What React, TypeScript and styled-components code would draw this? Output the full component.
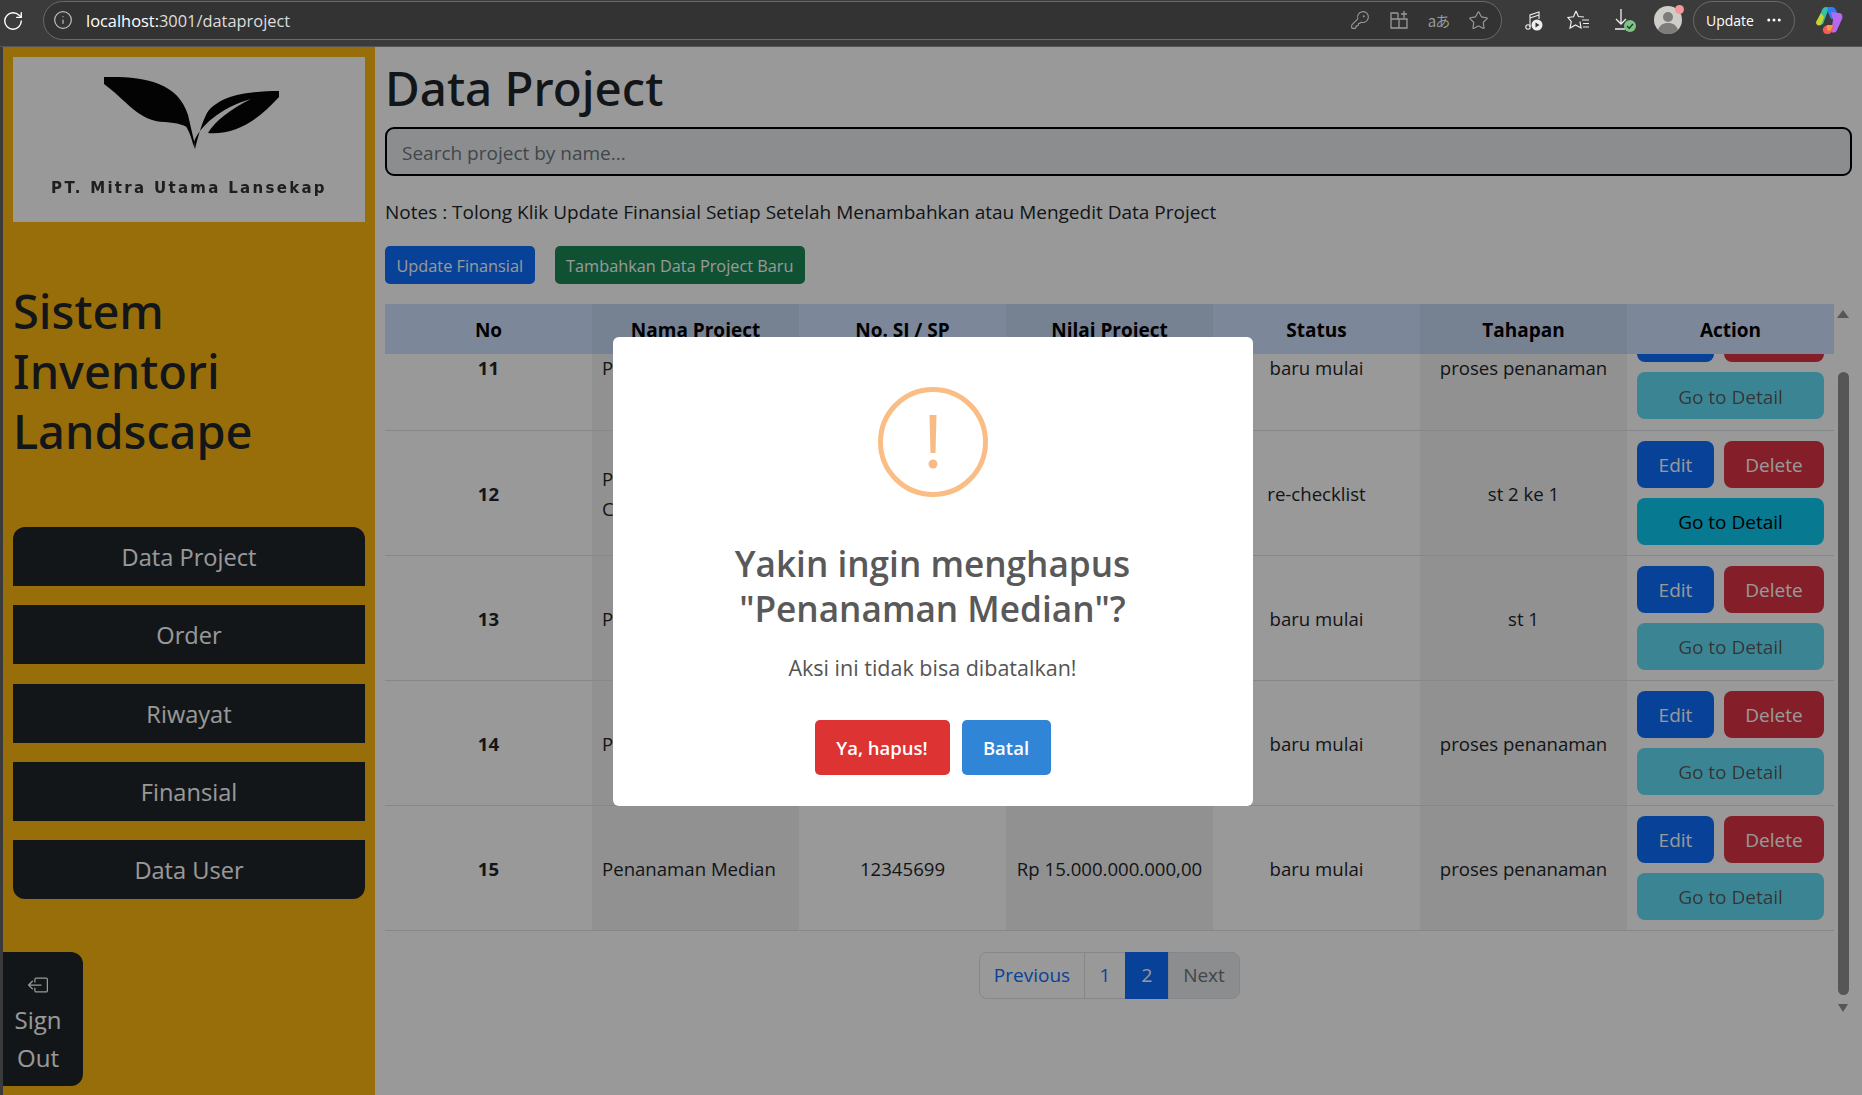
import React, { useLayoutEffect, useRef } from "react";
import styled, { createGlobalStyle } from "styled-components";
import { BsBoxArrowLeft } from "react-icons/bs";
import { RotateCw, Info, KeyRound, Star, MoreHorizontal } from "lucide-react";

const Global = createGlobalStyle`
  html, body { margin: 0; padding: 0; height: 100%; overflow: hidden; }
  body { font-family: "Open Sans", "Noto Sans", sans-serif; color: #212529; background: #3b3b3b; }
  * { box-sizing: border-box; }
`;
const Root = styled.div`height: 1095px; display: flex; flex-direction: column; position: relative; overflow: hidden;`;
const Bar = styled.div`height: 47px; flex: none; display: flex; align-items: center; background: #3b3b3b; color: #fff; border-bottom: 1px solid #555;`;
const Reload = styled.div`width: 43px; padding: 0 0 5px 2px; display: flex; align-items: center;`;
const Address = styled.div`width: 1459px; height: 39px; margin-top: -6px; border: 1px solid #6a6a6a; border-radius: 20px; background: #333; display: flex; align-items: center; padding: 0 12px 0 9px; gap: 13px;`;
const Url = styled.div`font-size: 16.4px; flex: 1; color: #ddd; b { font-weight: 400; color: #fff; }`;
const Gray = styled.div`display: flex; align-items: center; gap: 19px; color: #9a9a9a;`;
const Lang = styled.span`font-family: "Noto Sans CJK JP", "Noto Sans", sans-serif; font-size: 15px; width: 21px; text-align: center; letter-spacing: -1px; white-space: nowrap; display: flex; justify-content: center;`;
const Tools = styled.div`display: flex; align-items: center; margin-top: -6px; gap: 24px; padding-left: 23px;`;
const Avatar = styled.div`position: relative; width: 28px; height: 28px; margin-left: -8px; flex: none;`;
const Dot = styled.span`position: absolute; top: -1px; right: -2px; width: 9px; height: 9px; background: #f29a9a; border-radius: 50%;`;
const UpdatePill = styled.div`width: 102px; height: 39px; margin-left: -13px; border: 1px solid #6a6a6a; border-radius: 20px; display: flex; align-items: center; gap: 11px; padding-left: 12px; font-size: 14px; flex: none;`;
const Copilot = styled.div`margin-left: -4px; display: flex; flex: none;`;

const Page = styled.div`flex: 1; min-height: 0; margin-left: 3px; display: flex; position: relative; background: #fff;`;
const Side = styled.aside`width: 372px; flex: none; background: rgb(252, 184, 16); padding: 10px 10px 9px; display: flex; flex-direction: column;`;
const Logo = styled.div`height: 165px; background: #fff; display: flex; flex-direction: column; align-items: center;`;
const LogoText = styled.div`font-family: "DejaVu Sans", sans-serif; font-weight: 700; font-size: 15px; line-height: 16px; color: #333; letter-spacing: 2.3px; white-space: nowrap; margin-top: 25px; filter: blur(.4px);`;
const Brand = styled.h1`font-size: 47px; font-weight: 500; line-height: 60px; margin: 59px 0 66px; color: #212529; font-family: "Noto Sans", sans-serif;`;
const Nav = styled.nav`display: flex; flex-direction: column; gap: 19.25px;`;
const NavBtn = styled.button`height: 59px; background: #212529; color: #fff; border: 0; border-radius: 0; font: inherit; font-size: 23.6px; padding-top: 2px; &:first-child { border-radius: 12px 12px 0 0; } &:last-child { border-radius: 0 0 12px 12px; }`;
const SignOut = styled.button`width: 80px; height: 134px; margin: auto 0 0 -10px; background: #212529; color: #fff; border: 0; border-radius: 0 12px 12px 0; font: inherit; font-size: 24px; line-height: 38px; display: flex; flex-direction: column; align-items: center; justify-content: flex-start; padding: 23px 10px 0 0; svg { margin-bottom: 6px; }`;
const Main = styled.main`flex: 1; min-width: 0; padding: 0 10px; display: flex; flex-direction: column;`;
const H = styled.h1`font-size: 47.5px; font-weight: 500; line-height: 60px; margin: 11px 0 9px 0; font-family: "Noto Sans", sans-serif;`;
const Search = styled.input`height: 49px; width: 1467px; border: 2.5px solid #000; border-radius: 9px; padding: 2px 15px 0; font: inherit; font-size: 19px; background: #e9ecef; outline: 0; flex: none; &::placeholder { color: #6c757d; }`;
const Notes = styled.p`font-size: 19px; line-height: 30px; margin: 21px 0 19px;`;
const Actions = styled.div`display: flex; gap: 20px; margin-bottom: 20px;`;
const SmallBtn = styled.button<{ $bg: string }>`height: 38px; border: 0; border-radius: 5px; padding: 1px 11.5px 0; color: #fff; background: ${p => p.$bg}; font: inherit; font-size: 16.3px; white-space: nowrap;`;
const Area = styled.div`display: flex; width: 1467px; height: 713px; flex: none;`;
const Scroll = styled.div`width: 1449px; height: 100%; overflow-y: scroll; scrollbar-width: none;`;
const Table = styled.table`width: 1449px; border-collapse: collapse; table-layout: fixed;`;
const Th = styled.th<{ $even?: boolean }>`height: 50px; position: sticky; top: 0; z-index: 2; padding: 2px 0 0; font-size: 19px; font-weight: 700; color: #000; background: ${p => p.$even ? "#c5d7f2" : "#cfe2ff"};`;
const Tr = styled.tr`height: 125px; border-bottom: 1px solid #dee2e6;`;
const Td = styled.td<{ $even?: boolean; $bold?: boolean; $left?: boolean }>`padding: 2px ${p => p.$left ? "8px" : "9px"} 0 ${p => p.$left ? "10px" : "9px"}; font-size: 18.6px; line-height: 30px; color: #212529; text-align: ${p => p.$left ? "left" : "center"}; font-weight: ${p => p.$bold ? 700 : 400}; background: ${p => p.$even ? "#f2f2f2" : "#fff"};`;
const Money = styled.span`white-space: nowrap;`;
const BtnGrid = styled.div`display: grid; grid-template-columns: 77px 100px; gap: 10px; justify-content: center; margin-top: -2px;`;
const RowBtn = styled.button<{ $bg: string; $dark?: boolean; $wide?: boolean }>`height: 47px; border: 0; border-radius: 8px; background: ${p => p.$bg}; color: ${p => p.$dark ? "#000" : "#fff"}; font: inherit; font-size: 19px; padding: 2px 0 0; ${p => p.$wide ? "grid-column: 1 / 3;" : ""} &:disabled { opacity: .65; }`;
const Pager = styled.div`display: flex; justify-content: center; margin: 21px 0 19px; height: 47px;`;
const PageBtn = styled.div<{ $active?: boolean; $off?: boolean; $w: number; $first?: boolean; $last?: boolean }>`width: ${p => p.$w}px; height: 47px; display: flex; align-items: center; justify-content: center; font-size: 19px; border: 1px solid ${p => p.$active ? "#0d6efd" : "#dee2e6"}; margin-left: ${p => p.$first ? 0 : -1}px; background: ${p => p.$active ? "#0d6efd" : p.$off ? "#e9ecef" : "#fff"}; color: ${p => p.$active ? "#fff" : p.$off ? "#6c757d" : "#0d6efd"}; border-radius: ${p => p.$first ? "8px 0 0 8px" : p.$last ? "0 8px 8px 0" : "0"};`;
const Rail = styled.div`width: 16px; margin-left: 1px; display: flex; flex-direction: column; align-items: center; height: 100%; background: #fff;`;
const Thumb = styled.div`width: 11px; height: 623px; background: #8f8f8f; border-radius: 6px; margin: 52px 0 2px; flex: none;`;
const Arrow = styled.svg`flex: none; margin-top: 6px;`;

const Overlay = styled.div`position: absolute; inset: 0; background: rgba(0,0,0,.4); display: flex; align-items: center; justify-content: center; z-index: 5; padding-top: 1px;`;
const Modal = styled.div`width: 640px; height: 469px; background: #fff; border-radius: 6px; display: flex; flex-direction: column; align-items: center; color: #545454;`;
const Ring = styled.div`margin-top: 50px; width: 110px; height: 110px; border: 5px solid #fabd85; border-radius: 50%; display: flex; align-items: center; justify-content: center; font-size: 0; flex: none;`;
const Mark = styled.svg`display: block;`;
const MTitle = styled.h2`margin: 44px 0 0; font-size: 35.2px; line-height: 45px; font-weight: 600; color: #595959; text-align: center;`;
const MText = styled.p`margin: 20px 0 0; font-size: 21.5px; line-height: 34px; color: #545454;`;
const MBtns = styled.div`display: flex; gap: 12px; margin-top: 35px;`;
const MBtn = styled.button<{ $bg: string; $w: number }>`width: ${p => p.$w}px; height: 55px; border: 0; border-radius: 5px; background: ${p => p.$bg}; color: #fff; font: inherit; font-size: 18.5px; font-weight: 600; padding: 0;`;

const rows = [
  { no: 11, name: "Penanaman Median", si: "12345699", val: "Rp 15.000.000.000,00", st: "baru mulai", ta: "proses penanaman", off: true },
  { no: 12, name: "Penanaman Median Cibubur", si: "12345699", val: "Rp 15.000.000.000,00", st: "re-checklist", ta: "st 2 ke 1", off: false },
  { no: 13, name: "Penanaman Median", si: "12345699", val: "Rp 15.000.000.000,00", st: "baru mulai", ta: "st 1", off: true },
  { no: 14, name: "Penanaman Median", si: "12345699", val: "Rp 15.000.000.000,00", st: "baru mulai", ta: "proses penanaman", off: true },
  { no: 15, name: "Penanaman Median", si: "12345699", val: "Rp 15.000.000.000,00", st: "baru mulai", ta: "proses penanaman", off: true },
];
const heads = ["No", "Nama Project", "No. SI / SP", "Nilai Project", "Status", "Tahapan", "Action"];

const Leaves = () => (
  <svg width="352" height="98" viewBox="0 0 352 98">
    <path d="M91 20 C128 19 165 24 175 58 L181 84 L182 92 L180 87 C176 68 160 44 122 28 C146 36 166 50 176 72 C172 68 165 66 152 65 C126 65 112 42 91 27 Z" fill="#050505" />
    <path d="M266 34 C236 34 206 38 194 56 C189 66 186 76 182 92 L181 85 C186 70 208 50 238 42 C218 52 202 64 195 76 C224 78 246 62 266 40 Z" fill="#050505" />
  </svg>
);

export default function App() {
  const ref = useRef<HTMLDivElement>(null);
  useLayoutEffect(() => { if (ref.current) ref.current.scrollTop = 49; }, []);
  return (
    <Root>
      <Global />
      <Bar>
        <Reload><RotateCw size={22} strokeWidth={1.5} /></Reload>
        <Address>
          <Info size={20} strokeWidth={1.5} color="#bbb" />
          <Url><b>localhost:</b>3001/dataproject</Url>
          <Gray>
            <KeyRound size={20} strokeWidth={1.3} />
            <svg width="20" height="20" viewBox="0 0 20 20" fill="none" stroke="currentColor" strokeWidth="1.3"><path d="M9 3H2v15h16V9H2M10 9v9M9 3v6M15 1v7M12 4h6" /></svg>
            <Lang>aあ</Lang>
            <Star size={21} strokeWidth={1.3} />
          </Gray>
        </Address>
        <Tools>
          <svg width="18" height="22" viewBox="0 0 18 22" fill="none" stroke="#eee" strokeWidth="1.1"><circle cx="3" cy="18" r="2.2" /><path d="M5 18V6l9-3v7" /><path d="M5 9l9-3" /><circle cx="12" cy="16" r="5.5" fill="#eee" stroke="none" /><path d="M10.5 13.5v5l4-2.5z" fill="#333" stroke="none" /></svg>
          <svg width="23" height="22" viewBox="0 0 23 22" fill="none" stroke="#eee" strokeWidth="1.2"><path d="M9 2l2.4 5.5 5.6.5M13 12.5l1 6.5-5.5-3L3 19l1.3-6.3L1 8.5l5.5-.7L9 2" /><path d="M15 11h7M16 14.5h6M16 18h6" /></svg>
          <svg width="24" height="26" viewBox="0 0 24 26" fill="none" stroke="#eee" strokeWidth="1.3"><path d="M7 2v15M2 12l5 5 5-5M1 22h10" /><circle cx="16" cy="19" r="6" fill="#7cc47f" stroke="none" /><path d="M13 19l2.2 2.2L19 17" stroke="#234" /></svg>
          <Avatar>
            <svg width="28" height="28" viewBox="0 0 28 28"><circle cx="14" cy="14" r="14" fill="#cfcdc8" /><circle cx="14" cy="11" r="5" fill="#7e7c7a" /><path d="M4 24c2-6 6-7 10-7s8 1 10 7a14 14 0 0 1-20 0z" fill="#7e7c7a" /></svg>
            <Dot />
          </Avatar>
          <UpdatePill>Update <MoreHorizontal size={18} /></UpdatePill>
          <Copilot>
            <svg width="28" height="30" viewBox="0 0 28 30">
              <path d="M11 2h6c2 0 3 1 4 3l3 8-8 1-5-11z" fill="#2f7cf6" />
              <path d="M2 18L7 5c1-2 2-3 4-3 2 0 2 3 1 6l-4 11c-1 1-6 1-6-1z" fill="#35c1a5" />
              <path d="M1 17l5-9 3 4-3 8c-3 1-5 0-5-3z" fill="#c6d42f" />
              <path d="M16 7l8 1c3 0 4 3 3 6l-5 11c-1 3-4 3-6 2l2-12z" fill="#b768f0" />
              <path d="M8 26c-1-3 2-6 6-6h6l-3 6c-1 2-2 3-4 3s-4 0-5-3z" fill="#f25c5c" />
              <path d="M12 20h6l-2 5c-2 2-5 1-4-5z" fill="#f29b38" />
            </svg>
          </Copilot>
        </Tools>
      </Bar>
      <Page>
        <Side>
          <Logo>
            <Leaves />
            <LogoText>PT. Mitra Utama Lansekap</LogoText>
          </Logo>
          <Brand>Sistem<br />Inventori<br />Landscape</Brand>
          <Nav>
            {["Data Project", "Order", "Riwayat", "Finansial", "Data User"].map(n => <NavBtn key={n}>{n}</NavBtn>)}
          </Nav>
          <SignOut><BsBoxArrowLeft size={20} />Sign<br />Out</SignOut>
        </Side>
        <Main>
          <H>Data Project</H>
          <Search placeholder="Search project by name..." />
          <Notes>Notes : Tolong Klik Update Finansial Setiap Setelah Menambahkan atau Mengedit Data Project</Notes>
          <Actions>
            <SmallBtn $bg="#0d6efd">Update Finansial</SmallBtn>
            <SmallBtn $bg="#198754">Tambahkan Data Project Baru</SmallBtn>
          </Actions>
          <Area>
            <Scroll ref={ref}>
              <Table>
                <thead><tr>{heads.map((h, i) => <Th key={h} $even={i % 2 === 1}>{h}</Th>)}</tr></thead>
                <tbody>
                  {rows.map(r => (
                    <Tr key={r.no}>
                      <Td $bold>{r.no}</Td>
                      <Td $even $left>{r.name}</Td>
                      <Td>{r.si}</Td>
                      <Td $even><Money>{r.val}</Money></Td>
                      <Td>{r.st}</Td>
                      <Td $even>{r.ta}</Td>
                      <Td>
                        <BtnGrid>
                          <RowBtn $bg="#0d6efd">Edit</RowBtn>
                          <RowBtn $bg="#dc3545">Delete</RowBtn>
                          <RowBtn $bg="#0dcaf0" $dark $wide disabled={r.off}>Go to Detail</RowBtn>
                        </BtnGrid>
                      </Td>
                    </Tr>
                  ))}
                </tbody>
              </Table>
              <Pager>
                <PageBtn $first $w={106}>Previous</PageBtn>
                <PageBtn $w={42}>1</PageBtn>
                <PageBtn $active $w={44}>2</PageBtn>
                <PageBtn $off $last $w={72}>Next</PageBtn>
              </Pager>
            </Scroll>
            <Rail>
              <Arrow width="14" height="10" viewBox="0 0 14 10"><path d="M7 0l6 8H1z" fill="#8f8f8f" /></Arrow>
              <Thumb />
              <Arrow width="12" height="10" viewBox="0 0 12 10"><path d="M1 1h10L6 9z" fill="#8f8f8f" /></Arrow>
            </Rail>
          </Area>
        </Main>
        <Overlay>
          <Modal>
            <Ring>
              <Mark width="12" height="54" viewBox="0 0 12 54"><path d="M2.5 0h7l-1 38h-5z" fill="#f8bb86" /><circle cx="6" cy="49" r="4.5" fill="#f8bb86" /></Mark>
            </Ring>
            <MTitle>Yakin ingin menghapus<br />"Penanaman Median"?</MTitle>
            <MText>Aksi ini tidak bisa dibatalkan!</MText>
            <MBtns>
              <MBtn $bg="#dd3333" $w={135}>Ya, hapus!</MBtn>
              <MBtn $bg="#3085d6" $w={89}>Batal</MBtn>
            </MBtns>
          </Modal>
        </Overlay>
      </Page>
    </Root>
  );
}
